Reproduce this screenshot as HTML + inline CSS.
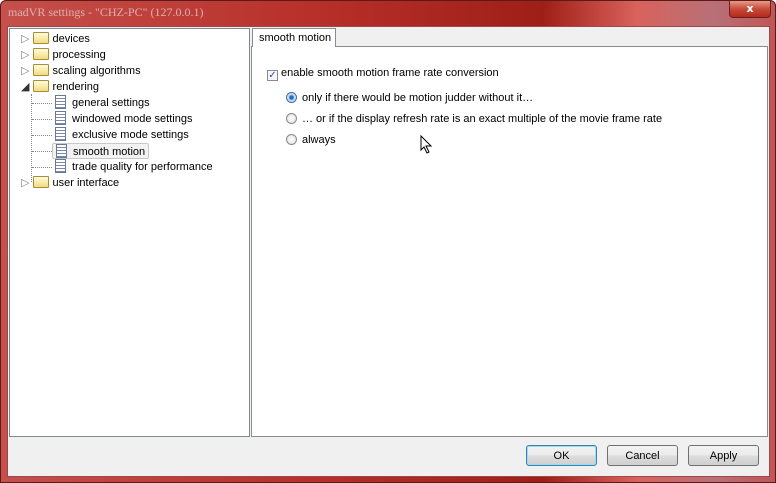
<!DOCTYPE html><html><head><style>
body{margin:0;width:776px;height:483px;overflow:hidden;background:#fff;font-family:"Liberation Sans",sans-serif;font-size:11px;color:#000}
#frame{position:absolute;left:0;top:0;width:776px;height:483px;background:linear-gradient(90deg,#c5504c 0%,#b8302a 40%,#9e1f18 70%,#d9625c 82%,#b87078 92%,#c05555 100%);border-radius:6px 6px 0 0;box-shadow:inset 0 0 0 1px #5a1a18}
#title{position:absolute;left:8px;top:5px;color:#e6c9c7;font-family:"Liberation Serif",serif;font-size:12px;opacity:.8}
#close{position:absolute;left:729px;top:1px;width:40px;height:16px;border:1px solid #6a2020;border-top:none;border-radius:0 0 4px 4px;background:linear-gradient(#e89a8a,#c64a3a 50%,#b52a1a);color:#fff;text-align:center;font:bold 11px "DejaVu Sans";line-height:16px}
#client{position:absolute;left:8px;top:27px;width:761px;height:449px;background:#f0f0f0;box-shadow:0 0 0 1px #9a4a48}
.box{position:absolute;background:#fff;border:1px solid #828790}
.row{position:absolute;height:16px;line-height:16px;white-space:nowrap}
.fold{display:inline-block;width:16px;height:12px;background:linear-gradient(#fffbe0,#f3dc7a);border:1px solid #a8903a;box-sizing:border-box;vertical-align:-2px;margin-right:4px;border-radius:1px}
.doc{display:inline-block;width:11px;height:14px;background:repeating-linear-gradient(#fff 0 2px,#7a8aa8 2px 3px);border:1px solid #6a7890;box-sizing:border-box;vertical-align:-3px;margin-right:6px}
.btn{position:absolute;top:418px;width:71px;height:21px;border:1px solid #707070;border-radius:3px;background:linear-gradient(#f2f2f2,#ebebeb 50%,#dddddd 51%,#cfcfcf);text-align:center;line-height:21px;box-sizing:border-box}
.radio{display:inline-block;width:11px;height:11px;border-radius:50%;border:1px solid #8a8a8a;background:radial-gradient(#fff,#ddd);box-sizing:border-box;vertical-align:-2px;margin-right:5px}
.dot{position:absolute;border-left:1px dotted #888}
.hd{position:absolute;border-top:1px dotted #888}
</style></head><body>
<div id="frame"></div>
<div id="title">madVR settings - "CHZ-PC" (127.0.0.1)</div>
<div id="close">x</div>
<div id="client">
 <div class="box" style="left:1px;top:1px;width:239px;height:407px">
  <div class="dot" style="left:21px;top:65px;height:88px"></div>
  <div class="row" style="left:11px;top:2px"><span style="color:#888">▷</span> <span class="fold"></span>devices</div>
  <div class="row" style="left:11px;top:18px"><span style="color:#888">▷</span> <span class="fold"></span>processing</div>
  <div class="row" style="left:11px;top:34px"><span style="color:#888">▷</span> <span class="fold"></span>scaling algorithms</div>
  <div class="row" style="left:11px;top:50px"><span style="color:#333">◢</span> <span class="fold"></span>rendering</div>
  <div class="hd" style="left:22px;top:74px;width:20px"></div><div class="hd" style="left:22px;top:90px;width:20px"></div><div class="hd" style="left:22px;top:106px;width:20px"></div><div class="hd" style="left:22px;top:122px;width:20px"></div><div class="hd" style="left:22px;top:138px;width:20px"></div>
  <div class="row" style="left:45px;top:66px"><span class="doc"></span>general settings</div>
  <div class="row" style="left:45px;top:82px"><span class="doc"></span>windowed mode settings</div>
  <div class="row" style="left:45px;top:98px"><span class="doc"></span>exclusive mode settings</div>
  <div class="row" style="left:42px;top:114px;padding:0 3px;border:1px solid #c8c8c8;border-radius:2px;background:#f2f2f2;height:14px;line-height:14px"><span class="doc"></span>smooth motion</div>
  <div class="row" style="left:45px;top:130px"><span class="doc"></span>trade quality for performance</div>
  <div class="row" style="left:11px;top:146px"><span style="color:#888">▷</span> <span class="fold"></span>user interface</div>
 </div>
 <div class="box" style="left:243px;top:19px;width:515px;height:389px;border-color:#898c95"></div>
 <div style="position:absolute;left:244px;top:1px;width:84px;height:19px;background:#fff;border:1px solid #898c95;border-bottom:none;line-height:19px;padding-left:6px;box-sizing:border-box;white-space:nowrap">smooth motion</div>
 <div class="row" style="left:259px;top:38px"><span style="display:inline-block;width:11px;height:11px;border:1px solid #8a8a8a;background:#f4f6fa;box-sizing:border-box;vertical-align:-2px;margin-right:3px;color:#2a50a0;font-size:10px;line-height:9px;text-align:center">✓</span>enable smooth motion frame rate conversion</div>
 <div class="row" style="left:278px;top:63px"><span class="radio" style="background:radial-gradient(#1a6fd0 30%,#bcd 40%,#fff);border-color:#3b6fa6"></span>only if there would be motion judder without it…</div>
 <div class="row" style="left:278px;top:84px"><span class="radio"></span>… or if the display refresh rate is an exact multiple of the movie frame rate</div>
 <div class="row" style="left:278px;top:105px"><span class="radio"></span>always</div>
 <div class="btn" style="left:518px;border-color:#3c7fb1;box-shadow:inset 0 0 0 1px #9de;">OK</div>
 <div class="btn" style="left:599px">Cancel</div>
 <div class="btn" style="left:680px">Apply</div>
</div>
<svg style="position:absolute;left:420px;top:135px" width="12" height="19"><path d="M1 1 L1 15 L4 12 L7 18 L9 17 L6 11 L11 11 Z" fill="#fff" stroke="#000"/></svg>
</body></html>
